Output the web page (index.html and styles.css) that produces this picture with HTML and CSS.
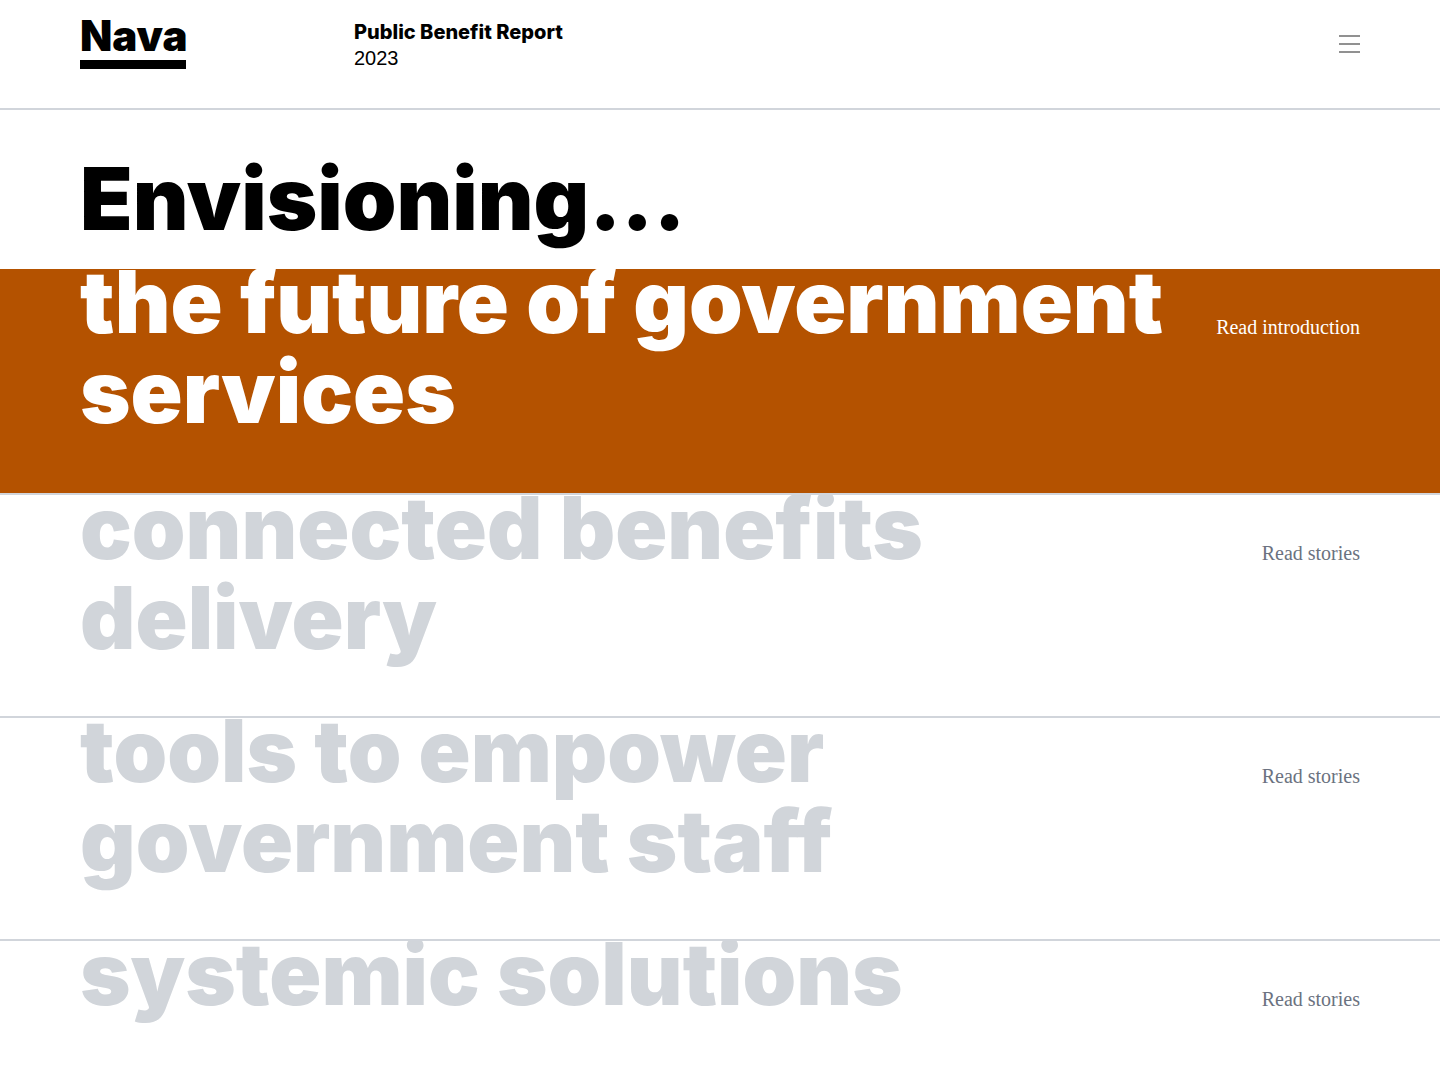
FILE: index.html
```html
<!DOCTYPE html>
<html lang="en">
<head>
<meta charset="utf-8">
<meta name="viewport" content="width=device-width, initial-scale=1">
<title>Nava Public Benefit Report 2023</title>
<link rel="stylesheet" href="styles.css">
</head>
<body>
<header class="header">
  <a class="logo" href="#">Nava</a>
  <p class="report"><strong class="report-name">Public Benefit Report</strong><span class="report-year">2023</span></p>
  <button class="menu" type="button" aria-label="Menu"><svg width="22" height="18" viewBox="0 0 22 18" aria-hidden="true"><path d="M1 1h21M1 9h21M1 17h21" stroke="#919191" stroke-width="2"/></svg></button>
</header>
<main>
  <h1 class="title">Envisioning...</h1>
  <nav class="chapters" aria-label="Chapters">
    <a class="chapter chapter-active" href="#"><span class="heading">the future of government<br>services</span><span class="read">Read introduction</span></a>
    <a class="chapter" href="#"><span class="heading">connected benefits<br>delivery</span><span class="read">Read stories</span></a>
    <a class="chapter" href="#"><span class="heading">tools to empower<br>government staff</span><span class="read">Read stories</span></a>
    <a class="chapter" href="#"><span class="heading">systemic solutions</span><span class="read">Read stories</span></a>
  </nav>
</main>
</body>
</html>
```
FILE: styles.css
```css
* {
  box-sizing: border-box;
}

body {
  margin: 0;
  background: #fff;
  color: #000;
  font-family: Inter, "Liberation Sans", sans-serif;
}

a {
  color: inherit;
  text-decoration: none;
}

.header {
  display: flex;
  align-items: flex-start;
  min-height: 110px;
  padding: 19px 80px 0;
  border-bottom: 2px solid #d1d5db;
}

.logo {
  width: 106px;
  height: 50px;
  margin-right: 168px;
  border-bottom: 9px solid #000;
  font-size: 42px;
  font-weight: 900;
  line-height: 34px;
}

.report {
  margin: 0;
  font-size: 20px;
  line-height: 26px;
}

.report-name {
  display: block;
  font-weight: 800;
}

.report-year {
  font-family: "Liberation Sans", sans-serif;
}

.menu {
  margin: 16px 0 0 auto;
  padding: 0;
  border: 0;
  background: none;
}

.menu svg {
  display: block;
}

.title,
.heading {
  font-size: 86px;
  font-weight: 900;
  line-height: 90px;
}

.title {
  margin: 0;
  padding: 44px 80px 25px;
}

.chapter {
  display: flex;
  justify-content: space-between;
  min-height: 223px;
  padding: 0 80px;
  overflow: hidden;
  border-bottom: 2px solid #d1d5db;
  color: #6b7280;
}

.chapter:last-child {
  min-height: 0;
  padding-bottom: 56px;
  border-bottom: 0;
}

/* Ascenders rise to the rule above each chapter. */
.heading {
  margin-top: -12px;
  color: #d1d5da;
  white-space: nowrap;
}

.read {
  padding-top: 45px;
  font-family: "Liberation Serif", serif;
  font-size: 20px;
  line-height: 26px;
  white-space: nowrap;
}

.chapter-active {
  min-height: 226px;
  background: #b45200;
  color: #fff;
}

.chapter-active .heading {
  color: inherit;
}
```
